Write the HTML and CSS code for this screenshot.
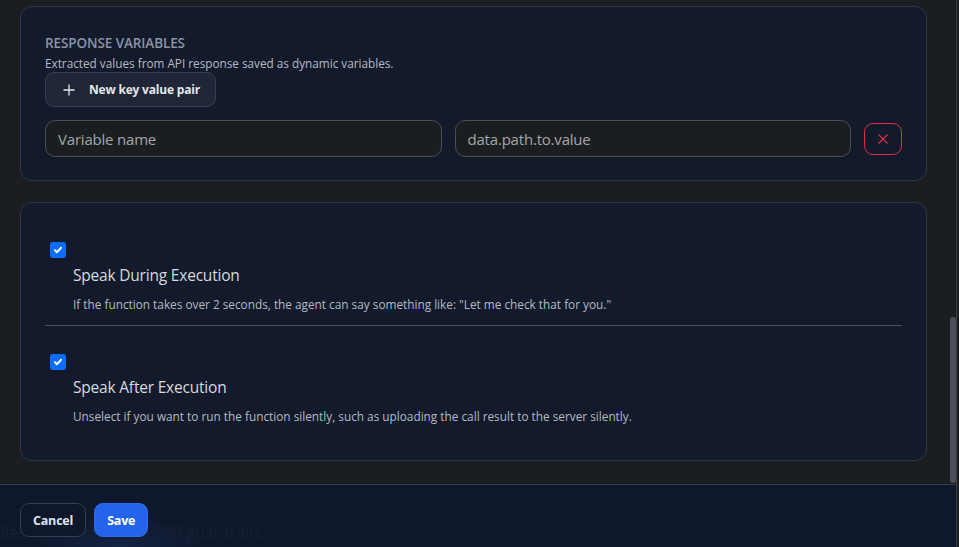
FILE: index.html
```html
<!DOCTYPE html>
<html lang="en">
<head>
    <meta charset="UTF-8">
    <meta name="viewport" content="width=device-width, initial-scale=1.0">
    <title>Function Settings</title>
    <link rel="stylesheet" href="styles.css">
</head>
<body>
    <div class="panel">
        <div class="scroll">
            <div class="content">
                <div class="card vars-card">
                    <h2 class="section-title">RESPONSE VARIABLES</h2>
                    <p class="section-desc">Extracted values from API response saved as dynamic variables.</p>
                    <button class="btn-add" type="button">
                        <svg width="14" height="14" viewBox="0 0 14 14" fill="none" stroke="currentColor" stroke-width="1.3">
                            <path d="M7 1.5v11M1.5 7h11"/>
                        </svg>
                        <span>New key value pair</span>
                    </button>
                    <div class="kv-row">
                        <input type="text" class="field" placeholder="Variable name">
                        <input type="text" class="field" placeholder="data.path.to.value">
                        <button class="btn-remove" type="button" aria-label="Remove">
                            <svg width="12" height="12" viewBox="0 0 12 12" fill="none" stroke="currentColor" stroke-width="1.2">
                                <path d="M1.5 1.5l9 9M10.5 1.5l-9 9"/>
                            </svg>
                        </button>
                    </div>
                </div>

                <div class="card options-card">
                    <div class="option">
                        <span class="check">
                            <svg width="10" height="10" viewBox="0 0 10 10" fill="none" stroke="#fff" stroke-width="2" stroke-linecap="round" stroke-linejoin="round">
                                <path d="M2 5.2l2 2 4-4.4"/>
                            </svg>
                        </span>
                        <div class="option-label">Speak During Execution</div>
                        <div class="option-desc">If the function takes over 2 seconds, the agent can say something like: "Let me check that for you."</div>
                    </div>
                    <hr class="divider">
                    <div class="option">
                        <span class="check">
                            <svg width="10" height="10" viewBox="0 0 10 10" fill="none" stroke="#fff" stroke-width="2" stroke-linecap="round" stroke-linejoin="round">
                                <path d="M2 5.2l2 2 4-4.4"/>
                            </svg>
                        </span>
                        <div class="option-label">Speak After Execution</div>
                        <div class="option-desc">Unselect if you want to run the function silently, such as uploading the call result to the server silently.</div>
                    </div>
                </div>
            </div>
            <div class="scroll-track">
                <div class="scroll-thumb"></div>
            </div>
        </div>

        <div class="footer">
            <div class="behind-text">Functions are called with knowledge and guardrails.</div>
            <button class="btn btn-cancel" type="button">Cancel</button>
            <button class="btn btn-save" type="button">Save</button>
        </div>
    </div>
</body>
</html>
```

FILE: styles.css
```css
:root {
    --page-bg: #1b1e21;
    --card-bg: #131a2b;
    --card-border: #2e3648;
    --field-border: #4a4e57;
    --muted: #8a94a6;
    --text: #c9ced6;
    --text-soft: #b4bac4;
    --danger: #dc3145;
    --primary: #2563eb;
    --check: #0d6efd;
}

* {
    box-sizing: border-box;
}

body {
    margin: 0;
    background-color: var(--page-bg);
    font-family: 'Open Sans', 'Noto Sans', sans-serif;
    color: var(--text);
}

.panel {
    width: 957px;
    height: 547px;
    display: flex;
    flex-direction: column;
    border-right: 1px solid #3a3f49;
    overflow: hidden;
}

.scroll {
    flex: 1;
    display: flex;
    min-height: 0;
}

.content {
    flex: 1;
    padding: 6px 23px 0 20px;
}

.scroll-track {
    width: 6px;
    padding-top: 317px;
}

.scroll-thumb {
    height: 166px;
    background: #4a4f59;
    border-radius: 3px;
}

.card {
    background: var(--card-bg);
    border: 1px solid var(--card-border);
    border-radius: 12px;
}

.vars-card {
    padding: 27px 24px 23px;
}

.section-title {
    margin: 0;
    font-size: 13.5px;
    line-height: 18px;
    font-weight: 600;
    color: var(--muted);
    letter-spacing: -0.1px;
}

.section-desc {
    margin: 3px 0 1px;
    font-size: 11.75px;
    line-height: 16px;
    color: var(--text-soft);
}

.btn-add {
    display: inline-flex;
    align-items: center;
    gap: 13px;
    height: 35px;
    padding: 0 15px 0 16px;
    background: #1e2637;
    border: 1px solid #363f52;
    border-radius: 9px;
    color: #e4e7ec;
    font-family: inherit;
    font-size: 12px;
    font-weight: 700;
    letter-spacing: -0.2px;
}

.kv-row {
    display: flex;
    align-items: center;
    gap: 13px;
    margin-top: 13px;
}

.field {
    flex: 1;
    min-width: 0;
    height: 37px;
    padding: 0 12px;
    background: var(--page-bg);
    border: 1px solid var(--field-border);
    border-radius: 10px;
    font-family: inherit;
    font-size: 15px;
    color: var(--text);
    letter-spacing: -0.2px;
}

.field::placeholder {
    color: #a2a6ad;
}

.btn-remove {
    flex: 0 0 38px;
    width: 38px;
    height: 32px;
    display: flex;
    align-items: center;
    justify-content: center;
    padding: 0;
    background: transparent;
    border: 1px solid var(--danger);
    border-radius: 9px;
    color: var(--danger);
}

.options-card {
    margin-top: 21px;
    padding: 39px 24px 35px;
}

.option {
    padding-left: 28px;
}

.check {
    display: flex;
    align-items: center;
    justify-content: center;
    width: 16px;
    height: 16px;
    margin-left: -23px;
    background: var(--check);
    border-radius: 3px;
}

.option-label {
    margin-top: 5px;
    font-size: 15.5px;
    line-height: 24px;
    color: #d5d9e0;
    letter-spacing: -0.2px;
}

.option-desc {
    margin-top: 8px;
    font-size: 11.8px;
    line-height: 18px;
    color: var(--text-soft);
}

.divider {
    margin: 12px 0 28px;
    border: 0;
    border-top: 1px solid #4b505a;
}

.footer {
    position: relative;
    flex: 0 0 63px;
    display: flex;
    align-items: flex-start;
    gap: 8px;
    padding: 18px 20px 0;
    border-top: 1px solid #3a3f49;
    background: radial-gradient(ellipse 90px 30px at 120px 60px, #142445, transparent), #0f172a;
    overflow: hidden;
}

.behind-text {
    position: absolute;
    right: 691px;
    top: 36px;
    font-size: 16px;
    color: #172034;
    white-space: nowrap;
}

.btn {
    position: relative;
    height: 34px;
    padding: 0 12px;
    border-radius: 9px;
    font-family: inherit;
    font-size: 12.5px;
    font-weight: 700;
    letter-spacing: -0.2px;
}

.btn-cancel {
    background: #0f172a;
    border: 1px solid #363e50;
    color: #dfe3e9;
}

.btn-save {
    padding: 0 12px;
    background: var(--primary);
    border: 1px solid #2f6cf0;
    color: #ffffff;
}
```
